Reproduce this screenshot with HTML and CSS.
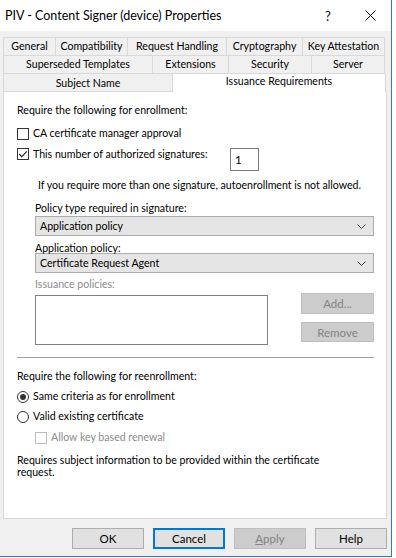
FILE: index.html
```html
<!DOCTYPE html>
<html lang="en">
<head>
  <meta charset="UTF-8" />
  <title>PIV - Content Signer (device) Properties</title>
  <link rel="stylesheet" href="styles.css">
</head>
<body>
  <div class="window">
    <div class="titlebar">
      <span class="title">PIV - Content Signer (device) Properties</span>
      <span class="title-help">?</span>
      <span class="title-close">
        <svg width="11" height="11" viewBox="0 0 11 11"><path d="M0.5 0.5 L10.5 10.5 M10.5 0.5 L0.5 10.5" stroke="#000" stroke-width="1" fill="none"/></svg>
      </span>
    </div>

    <div class="dialog">
      <!-- Tab strip, three rows -->
      <div class="tabs">
        <div class="tab-row row-1">
          <div class="tab">General</div>
          <div class="tab">Compatibility</div>
          <div class="tab">Request Handling</div>
          <div class="tab">Cryptography</div>
          <div class="tab">Key Attestation</div>
        </div>
        <div class="tab-row row-2">
          <div class="tab">Superseded Templates</div>
          <div class="tab">Extensions</div>
          <div class="tab">Security</div>
          <div class="tab">Server</div>
        </div>
        <div class="tab-row row-3">
          <div class="tab">Subject Name</div>
          <div class="tab active">Issuance Requirements</div>
        </div>
      </div>

      <div class="panel">
        <div class="heading first">Require the following for enrollment:</div>

        <div class="check-row row-ca">
          <span class="cb"></span>
          <span>CA certificate manager approval</span>
        </div>

        <div class="check-row row-sig">
          <span class="cb">
            <svg width="12" height="12" viewBox="0 0 12 12"><path d="M2.2 6 L4.8 8.6 L9.8 3.4" stroke="#222" stroke-width="1.1" fill="none"/></svg>
          </span>
          <span class="sig-label">This number of authorized signatures:</span>
          <span class="num-box">1</span>
        </div>

        <div class="note">If you require more than one signature, autoenrollment is not allowed.</div>

        <div class="indent">
          <div class="field-label label-type">Policy type required in signature:</div>
          <div class="combo">
            <span>Application policy</span>
            <svg width="9" height="5" viewBox="0 0 9 5"><path d="M0.5 0.5 L4.5 4.5 L8.5 0.5" stroke="#444" stroke-width="1" fill="none"/></svg>
          </div>

          <div class="field-label label-app">Application policy:</div>
          <div class="combo">
            <span>Certificate Request Agent</span>
            <svg width="9" height="5" viewBox="0 0 9 5"><path d="M0.5 0.5 L4.5 4.5 L8.5 0.5" stroke="#444" stroke-width="1" fill="none"/></svg>
          </div>

          <div class="field-label label-issuance disabled">Issuance policies:</div>
          <div class="list-row">
            <div class="listbox"></div>
            <div class="list-buttons">
              <div class="btn btn-disabled btn-add">Add...</div>
              <div class="btn btn-disabled btn-remove">Remove</div>
            </div>
          </div>
        </div>

        <div class="separator"></div>

        <div class="heading second">Require the following for reenrollment:</div>

        <div class="check-row row-same">
          <span class="radio checked"></span>
          <span>Same criteria as for enrollment</span>
        </div>
        <div class="check-row row-valid">
          <span class="radio"></span>
          <span>Valid existing certificate</span>
        </div>
        <div class="check-row row-renew indent disabled">
          <span class="cb cb-disabled"></span>
          <span>Allow key based renewal</span>
        </div>

        <div class="info">Requires subject information to be provided within the certificate<br>request.</div>
      </div>

      <div class="buttons">
        <div class="btn">OK</div>
        <div class="btn btn-focus">Cancel</div>
        <div class="btn btn-disabled"><u>A</u>pply</div>
        <div class="btn">Help</div>
      </div>
    </div>
  </div>
</body>
</html>
```

FILE: styles.css
```css
* {
  box-sizing: border-box;
}

body {
  margin: 0;
  background: #fff;
  color: #000;
  font-family: 'Lato', sans-serif;
  font-size: 10.6px;
}

.window {
  width: 392px;
  height: 557px;
  background: #f0f0f0;
  border-right: 1px solid #2b7bd0;
  border-bottom: 1px solid #2b7bd0;
  display: flex;
  flex-direction: column;
}

/* Title bar */
.titlebar {
  height: 31px;
  background: #fff;
  display: flex;
  align-items: center;
  padding-left: 5px;
  font-size: 12.5px;
}

.title {
  flex: 1;
}

.title-help {
  width: 16px;
  margin-right: 29px;
  font-size: 13px;
  text-align: center;
}

.title-close {
  width: 11px;
  height: 11px;
  margin-right: 15px;
  display: flex;
}

/* Dialog body */
.dialog {
  flex: 1;
  padding: 6px 0 0 3px;
}

.tabs {
  width: 384px;
}

.tab-row {
  display: flex;
  height: 18px;
}

.tab {
  border-top: 1px solid #d9d9d9;
  border-left: 1px solid #d9d9d9;
  background: #f0f0f0;
  text-align: center;
  line-height: 17px;
  white-space: nowrap;
}

.tab:last-child {
  border-right: 1px solid #d9d9d9;
}

.row-1 .tab:nth-child(1) { width: 52px; }
.row-1 .tab:nth-child(2) { width: 72px; }
.row-1 .tab:nth-child(3) { width: 99px; }
.row-1 .tab:nth-child(4) { width: 76px; }
.row-1 .tab:nth-child(5) { width: 83px; }

.row-2 .tab:nth-child(1) { width: 149px; }
.row-2 .tab:nth-child(2) { width: 76px; }
.row-2 .tab:nth-child(3) { width: 83px; }
.row-2 .tab:nth-child(4) { width: 74px; }

.row-3 .tab:nth-child(1) {
  width: 169px;
  line-height: 19px;
}

.tab.active {
  width: 214px;
  height: 19px;
  background: #fff;
  line-height: 14px;
  position: relative;
  z-index: 1;
}

/* Tab page */
.panel {
  width: 384px;
  height: 428px;
  background: #fff;
  border: 1px solid #d9d9d9;
  padding: 0 12px 0 13px;
  line-height: 15px;
}

.heading.first {
  margin-top: 11px;
}

.heading.second {
  margin-top: 11px;
}

.check-row {
  display: flex;
  align-items: center;
  height: 15px;
}

.check-row .cb,
.check-row .radio {
  margin-right: 4px;
  flex-shrink: 0;
}

.row-ca {
  margin-top: 8px;
}

.row-sig {
  margin-top: 7px;
  height: 23px;
  align-items: flex-start;
  line-height: 12px;
}

.sig-label {
  width: 197px;
}

.cb {
  width: 12px;
  height: 12px;
  border: 1px solid #333;
  background: #fff;
  display: flex;
  align-items: center;
  justify-content: center;
}

.cb svg {
  margin: -1px;
}

.cb-disabled {
  border-color: #bcbcbc;
}

.radio {
  width: 12px;
  height: 12px;
  border: 1px solid #333;
  border-radius: 50%;
  background: #fff;
  display: flex;
  align-items: center;
  justify-content: center;
}

.radio.checked::after {
  content: '';
  width: 6px;
  height: 6px;
  border-radius: 50%;
  background: #333;
}

.num-box {
  width: 29px;
  height: 23px;
  border: 1px solid #7a7a7a;
  padding-left: 4px;
  line-height: 21px;
  font-size: 11.5px;
}

.note {
  margin-top: 7px;
  padding-left: 21px;
  white-space: nowrap;
}

.indent {
  padding-left: 18px;
}

.field-label {
  white-space: nowrap;
}

.label-type {
  margin-top: 8px;
}

.label-app {
  margin-top: 5px;
  margin-bottom: -3px;
}

.label-issuance {
  margin-top: 4px;
}

.disabled {
  color: #8c8c8c;
}

.combo {
  height: 20px;
  background: #e5e5e5;
  border: 1px solid #acacac;
  display: flex;
  align-items: center;
  justify-content: space-between;
  padding: 0 7px 0 4px;
}

.list-row {
  display: flex;
  justify-content: space-between;
  margin-top: 1px;
}

.listbox {
  width: 233px;
  height: 50px;
  margin-top: 2px;
  border: 1px solid #828282;
  background: #fff;
}

.list-buttons {
  display: flex;
  flex-direction: column;
  gap: 8px;
}

.btn {
  width: 72px;
  height: 21px;
  background: #e1e1e1;
  border: 1px solid #adadad;
  text-align: center;
  line-height: 19px;
  font-size: 11.5px;
}

.btn-add,
.btn-remove {
  width: 73px;
}

.btn-remove {
  height: 20px;
}

.btn-disabled {
  background: #cccccc;
  border-color: #bfbfbf;
  color: #838383;
}

.btn-focus {
  border-color: #0078d7;
  box-shadow: inset 0 0 0 1px #0078d7;
}

.separator {
  height: 1px;
  margin-top: 12px;
  background: #a0a0a0;
}

.row-same {
  margin-top: 5px;
}

.row-valid {
  margin-top: 5px;
}

.row-renew {
  margin-top: 6px;
}

.info {
  margin-top: 9px;
  line-height: 12px;
}

.buttons {
  width: 384px;
  display: flex;
  justify-content: flex-end;
  gap: 9px;
  margin-top: 9px;
}
```
